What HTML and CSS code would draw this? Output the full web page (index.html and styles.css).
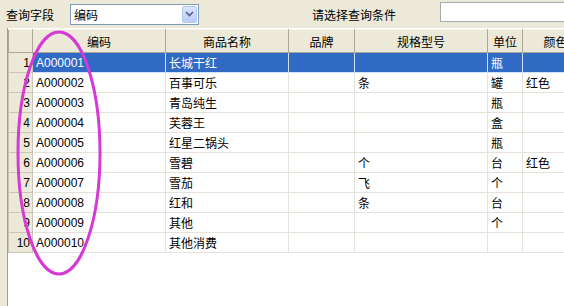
FILE: index.html
```html
<!DOCTYPE html>
<html lang="zh-CN">

<head>
  <meta charset="UTF-8">
  <title>商品查询</title>
  <link rel="stylesheet" href="styles.css">
</head>

<body>

  <!-- 查询条件栏 -->
  <div class="toolbar">
    <span class="label">查询字段</span>
    <div class="combo">
      <span class="combo-text">编码</span>
      <span class="combo-btn">
        <svg width="9" height="6" viewBox="0 0 9 6"><path d="M1 1 L4.5 4.5 L8 1" fill="none" stroke="#4d6185" stroke-width="1.6"/></svg>
      </span>
    </div>
    <span class="label cond">请选择查询条件</span>
    <input class="search" type="text">
  </div>

  <!-- 商品表格 -->
  <div class="panel">
    <table class="grid">
      <colgroup>
        <col style="width:24px">
        <col style="width:133px">
        <col style="width:123px">
        <col style="width:66px">
        <col style="width:133px">
        <col style="width:35px">
        <col style="width:66px">
      </colgroup>
      <thead>
        <tr>
          <th></th><th>编码</th><th>商品名称</th><th>品牌</th><th>规格型号</th><th>单位</th><th>颜色</th>
        </tr>
      </thead>
      <tbody>
        <tr class="sel"><td class="no">1</td><td>A000001</td><td>长城干红</td><td></td><td></td><td>瓶</td><td></td></tr>
        <tr><td class="no">2</td><td>A000002</td><td>百事可乐</td><td></td><td>条</td><td>罐</td><td>红色</td></tr>
        <tr><td class="no">3</td><td>A000003</td><td>青岛纯生</td><td></td><td></td><td>瓶</td><td></td></tr>
        <tr><td class="no">4</td><td>A000004</td><td>芙蓉王</td><td></td><td></td><td>盒</td><td></td></tr>
        <tr><td class="no">5</td><td>A000005</td><td>红星二锅头</td><td></td><td></td><td>瓶</td><td></td></tr>
        <tr><td class="no">6</td><td>A000006</td><td>雪碧</td><td></td><td>个</td><td>台</td><td>红色</td></tr>
        <tr><td class="no">7</td><td>A000007</td><td>雪茄</td><td></td><td>飞</td><td>个</td><td></td></tr>
        <tr><td class="no">8</td><td>A000008</td><td>红和</td><td></td><td>条</td><td>台</td><td></td></tr>
        <tr><td class="no">9</td><td>A000009</td><td>其他</td><td></td><td></td><td>个</td><td></td></tr>
        <tr><td class="no">10</td><td>A000010</td><td>其他消费</td><td></td><td></td><td></td><td></td></tr>
      </tbody>
    </table>

    <!-- 圈注 -->
    <svg class="mark" width="90" height="248" viewBox="0 0 90 248">
      <ellipse cx="45" cy="124" rx="41" ry="121" fill="none" stroke="#d63ad6" stroke-width="3"/>
    </svg>
  </div>

</body>

</html>
```

FILE: styles.css
```css
body {
  margin: 0;
  height: 306px;
  overflow: hidden;
  background: #ece9d8;
  font-family: "Liberation Sans", "Noto Sans CJK SC", sans-serif;
  font-size: 12px;
  color: #000;
}

/* 查询条件栏 */
.toolbar {
  display: flex;
  align-items: center;
  height: 28px;
  overflow: hidden;
}

.label {
  flex-shrink: 0;
  margin-left: 6px;
  white-space: nowrap;
  font-family: "Noto Sans CJK SC", sans-serif;
  font-size: 12px;
}

.combo {
  flex-shrink: 0;
  display: flex;
  align-items: center;
  justify-content: space-between;
  box-sizing: border-box;
  width: 129px;
  height: 21px;
  margin-left: 16px;
  padding: 0 1px 0 3px;
  background: #fff;
  border: 1px solid #7f9db9;
  font-family: "Noto Sans CJK SC", sans-serif;
}

.combo-btn {
  display: flex;
  align-items: center;
  justify-content: center;
  width: 15px;
  height: 17px;
  border: 1px solid #b6c8ee;
  border-radius: 2px;
  background: linear-gradient(#dbe6fd, #b8ccf6);
  box-sizing: border-box;
}

.label.cond {
  margin-left: 113px;
}

.search {
  flex-shrink: 0;
  box-sizing: border-box;
  width: 140px;
  height: 20px;
  margin: 0 0 4px 44px;
  border: 1px solid #a5acb5;
  background: #fff;
}

/* 表格 */
.panel {
  position: relative;
  height: 278px;
  margin-left: 7px;
  border-left: 1px solid #a0a0a0;
  background: #fff;
  overflow: hidden;
}

.grid {
  border-collapse: collapse;
  table-layout: fixed;
  width: 580px;
  margin-top: 1px;
  border-bottom: 1px solid #000;
}

.grid th {
  height: 22px;
  padding: 0;
  background: #ece9d8;
  border: 1px solid #aca899;
  border-top-color: #f4f3ee;
  font-family: "Noto Sans CJK SC", sans-serif;
  font-weight: normal;
  font-size: 12px;
  text-align: center;
}

.grid td {
  height: 19px;
  padding: 0 0 0 3px;
  border: 1px solid #e4e2da;
  white-space: nowrap;
  overflow: hidden;
}

.grid td.no {
  padding: 0 2px 0 0;
  text-align: right;
  background: #ece9d8;
  border-color: #c9c6b8;
}

.grid tr.sel td {
  background: #316ac5;
  color: #fff;
  border-color: #cfe3ff;
}

.grid tr.sel td.no {
  background: #ece9d8;
  color: #000;
  border-color: #c9c6b8;
}

.mark {
  position: absolute;
  left: 6px;
  top: 1px;
}
```
